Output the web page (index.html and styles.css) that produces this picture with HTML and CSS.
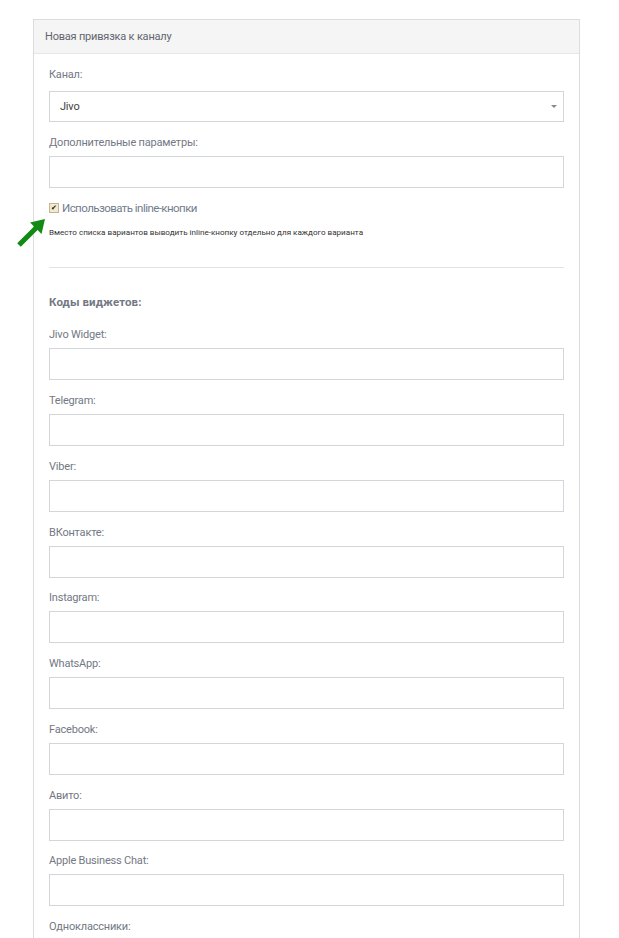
FILE: index.html
```html
<!DOCTYPE html>
<html lang="ru">
<head>
    <meta charset="UTF-8">
    <meta name="viewport" content="width=device-width, initial-scale=1.0">
    <title>Новая привязка к каналу</title>
    <link rel="stylesheet" href="styles.css">
</head>
<body>
    <div class="page">
        <svg class="hint-arrow" width="36" height="36" viewBox="0 0 36 36">
            <polygon points="31,5 27.5,19.9 23.6,16 6.8,32.8 3.2,29.2 20,12.4 16.1,8.5" fill="#138a13"/>
        </svg>

        <div class="panel">
            <div class="panel-heading">Новая привязка к каналу</div>
            <div class="panel-body">
                <div class="form-group select-group">
                    <label>Канал:</label>
                    <div class="select">Jivo<span class="caret"></span></div>
                </div>

                <div class="form-group">
                    <label>Дополнительные параметры:</label>
                    <div class="input"></div>
                </div>

                <div class="checkbox-row">
                    <span class="check">&#10004;</span>
                    <span class="check-label">Использовать inline-кнопки</span>
                </div>
                <p class="help">Вместо списка вариантов выводить inline-кнопку отдельно для каждого варианта</p>

                <hr class="divider">

                <h4 class="section-title">Коды виджетов:</h4>

                <div class="form-group"><label>Jivo Widget:</label><div class="input"></div></div>
                <div class="form-group"><label>Telegram:</label><div class="input"></div></div>
                <div class="form-group"><label>Viber:</label><div class="input"></div></div>
                <div class="form-group"><label>ВКонтакте:</label><div class="input"></div></div>
                <div class="form-group"><label>Instagram:</label><div class="input"></div></div>
                <div class="form-group"><label>WhatsApp:</label><div class="input"></div></div>
                <div class="form-group"><label>Facebook:</label><div class="input"></div></div>
                <div class="form-group"><label>Авито:</label><div class="input"></div></div>
                <div class="form-group"><label>Apple Business Chat:</label><div class="input"></div></div>
                <div class="form-group"><label>Одноклассники:</label><div class="input"></div></div>
            </div>
        </div>
    </div>
</body>
</html>
```

FILE: styles.css
```css
body {
    margin: 0;
    font-family: Roboto, "Liberation Sans", Arial, sans-serif;
    font-size: 12px;
    line-height: 1.428571;
    background-color: #fff;
    color: #333;
}

.page {
    position: relative;
    padding: 19px 0 0 33px;
}

.hint-arrow {
    position: absolute;
    left: 14px;
    top: 214px;
}

.panel {
    width: 545px;
    border: 1px solid #dcdcdc;
    border-bottom: none;
}

.panel-heading {
    height: 33px;
    line-height: 33px;
    padding-left: 11px;
    background-color: #f5f5f5;
    border-bottom: 1px solid #e6e6e6;
    color: #61656e;
    font-size: 11px;
    letter-spacing: -0.2px;
}

.panel-body {
    padding: 12px 15px 0 15px;
}

.form-group {
    margin-bottom: 11.75px;
}

.form-group label {
    display: block;
    margin-bottom: 5px;
    color: #737884;
    font-size: 11px;
    letter-spacing: -0.2px;
    line-height: 17px;
}

.select-group label {
    margin-bottom: 8px;
}

.select {
    position: relative;
    height: 29px;
    line-height: 29px;
    padding-left: 10px;
    border: 1px solid #d2d5da;
    color: #444;
    font-size: 11px;
    letter-spacing: -0.2px;
}

.caret {
    position: absolute;
    right: 6px;
    top: 13px;
    width: 0;
    height: 0;
    border-left: 3px solid transparent;
    border-right: 3px solid transparent;
    border-top: 3px solid #888;
}

.input {
    height: 30px;
    border: 1px solid #d2d5da;
}

.checkbox-row {
    display: flex;
    align-items: center;
    height: 18px;
    margin-top: -0.5px;
}

.check {
    display: inline-block;
    width: 8px;
    height: 8px;
    margin-right: 3px;
    border: 1px solid #c2b48e;
    background-color: #f3e9cf;
    color: #111;
    font-size: 7px;
    line-height: 8px;
    text-align: center;
}

.check-label {
    font-size: 11.5px;
    letter-spacing: -0.55px;
    color: #727d8c;
}

.help {
    margin: 9px 0 0 0;
    font-size: 8.1px;
    line-height: 12px;
    color: #333;
}

.divider {
    margin: 29px 0 0 0;
    border: none;
    border-top: 1px solid #e2e2e2;
}

.section-title {
    margin: 26px 0 16px 0;
    font-size: 11.5px;
    font-weight: bold;
    letter-spacing: 0.1px;
    color: #737784;
}
```
